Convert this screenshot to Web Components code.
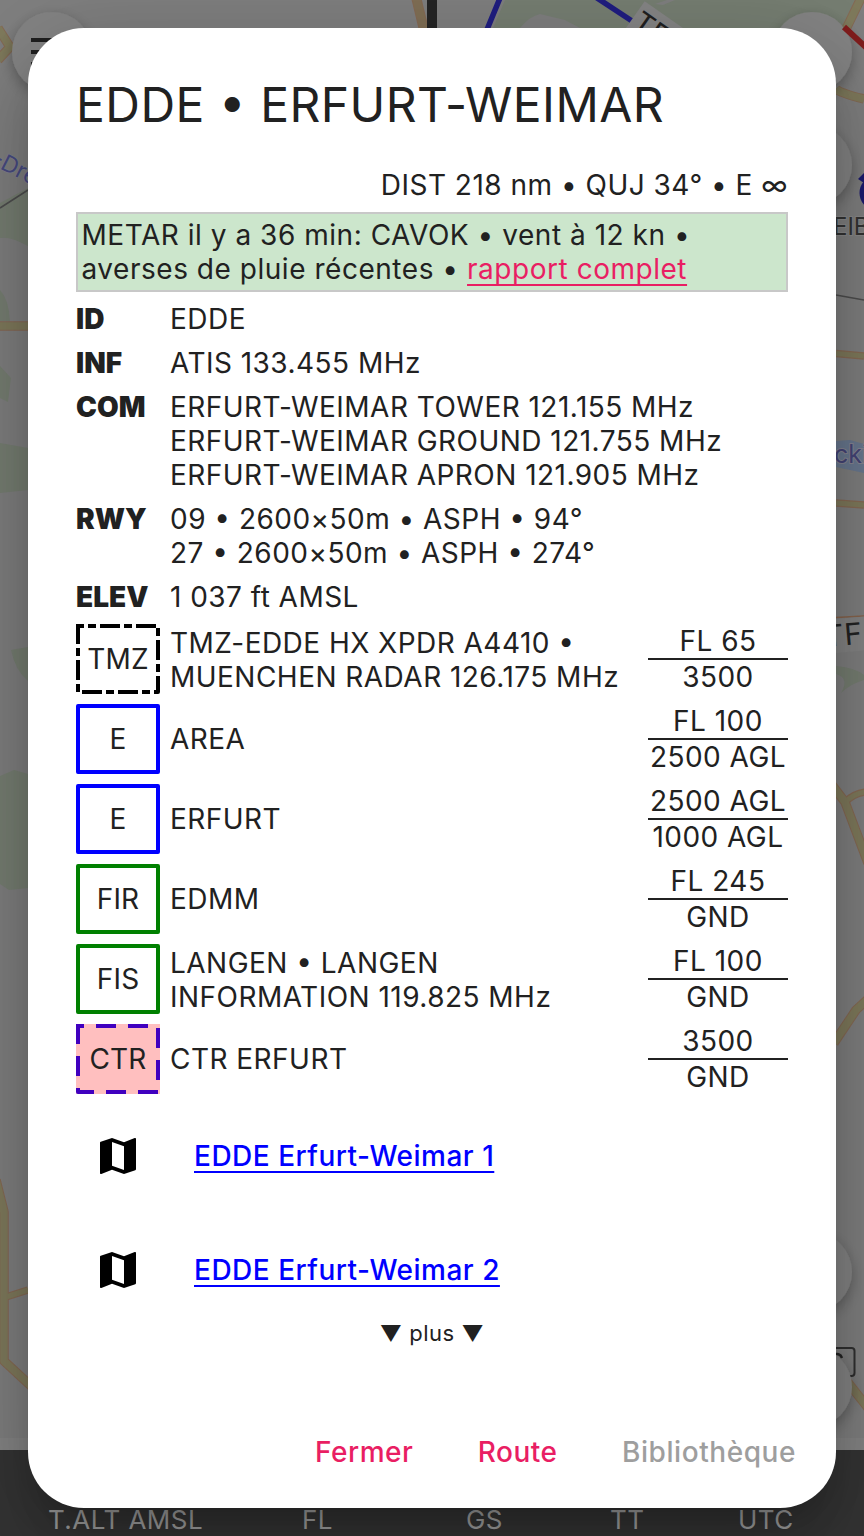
<!DOCTYPE html>
<html lang="fr">
<head>
<meta charset="utf-8">
<title>EDDE</title>
<style>
html,body{margin:0;height:100%;overflow:hidden;background:#7d7d7d}
body{font-family:Inter,"Noto Sans",sans-serif;color:#212121}
</style>
</head>
<body>
<flight-app></flight-app>
<script>
const define = (name, html, init) => {
  const t = document.createElement('template');
  t.innerHTML = html;
  customElements.define(name, class extends HTMLElement {
    constructor() {
      super();
      this.attachShadow({mode: 'open'}).append(t.content.cloneNode(true));
    }
    connectedCallback() { if (init) init(this, this.shadowRoot); }
  });
};

/* Dimmed chart behind the dialog */
define('chart-map', `
<style>
:host{display:block;width:864px;height:1450px}
svg{display:block}
text{font-family:Inter,"Noto Sans",sans-serif}
</style>
<svg width="864" height="1450" viewBox="0 0 864 1450">
  <defs><filter id="s" x="-50%" y="-50%" width="200%" height="200%"><feDropShadow dx="0" dy="5" stdDeviation="7" flood-opacity=".28"/></filter></defs>
  <rect width="864" height="1450" fill="#7f7f7f"/>
  <g fill="#767e72">
    <path d="M505 0H864L835 40H488zM0 203L28 188V246Q10 236 0 238zM0 290Q9 300 10 321H0zM0 366L11 378L8 402L0 398zM0 443L28 448V490L0 493zM11 650L28 647V681Q15 670 11 650zM0 776L14 770L28 774V888L9 890L0 884z"/>
    <path d="M836 666Q856 668 864 675V680Q850 684 841 693Q850 678 836 674z"/>
  </g>
  <path d="M520 28Q530 16 540 14L565 20L580 28zM655 4l12-4h8l-12 5z" fill="#7f7f7f"/>
  <g fill="none" stroke="#866a54" stroke-linejoin="round">
    <path stroke-width="7.500" d="M836 353.500L864 356M836 503L864 505M6 1297L28 1290M845 802Q856 792 868 792"/>
    <path stroke-width="9.500" d="M0 326H28M864 -8L846 29M836 89Q840 93 864 99M-2 28L10 47L-2 60M-4 1180L4 1212V1361L31 1386M832 785L845 802L868 863M834 1043L856 1010L868 999M846 1380L868 1408"/>
    <path stroke-width="10" d="M416 -3L424 30"/>
  </g>
  <g fill="none" stroke="#7f7a5c" stroke-linejoin="round">
    <path stroke-width="5" d="M836 353.500L864 356M836 503L864 505M6 1297L28 1290M845 802Q856 792 868 792"/>
    <path stroke-width="7.500" d="M0 326H28M864 -8L846 29M836 89Q840 93 864 99M-2 28L10 47L-2 60M-4 1180L4 1212V1361L31 1386M832 785L845 802L868 863M834 1043L856 1010L868 999M846 1380L868 1408"/>
    <path d="M416 -3L424 30" stroke="#806f55" stroke-width="8"/>
  </g>
  <path d="M0 208L28 190M836 295L864 300" stroke="#4d4d4d" stroke-width="1.500"/>
  <path d="M836 617.500L864 616" stroke="#87644c" stroke-width="1.500"/>
  <path d="M427 0H437V30H427z" fill="#252525"/>
  <path d="M500 -2L486 32M594 -4L632 21" stroke="#201e80" stroke-width="5.500"/>
  <g transform="translate(641,17) rotate(35)"><path d="M-6 -15H70V22H-6z" fill="#858585"/><text x="-3" y="14" font-size="29" fill="#202020">TF</text></g>
  <path d="M836 441L850 440L864 444V473L836 467z" fill="#69788f"/>
  <text x="834" y="463" font-size="25" fill="#444477" stroke="#858592" stroke-width="2" paint-order="stroke">cki</text>
  <text x="833" y="235" font-size="24" fill="#333" stroke="#898989" stroke-width="2" paint-order="stroke">EIB</text>
  <path d="M877 179A14 14 0 0 0 877 207" fill="none" stroke="#1c1a70" stroke-width="7"/>
  <path d="M858 179L864 173V183z" fill="#1c1a70"/>
  <g transform="translate(836,636) rotate(-5)"><path d="M-4 -17H40V17H-4z" fill="#848484"/><text x="-12" y="10" font-size="30" letter-spacing="1" fill="#222">TFC</text></g>
  <text x="-13" y="169" font-size="23" fill="#484b80" transform="rotate(27 0 172)" stroke="#858592" stroke-width="1" paint-order="stroke">-Dre</text>
  <g filter="url(#s)" fill="#848484"><circle cx="52" cy="52" r="40"/><circle cx="812" cy="52" r="40"/><circle cx="812" cy="165" r="40"/><circle cx="812" cy="1272" r="40"/></g>
  <path d="M31 38H70V42H31zM31 50H70V54H31zM31 62H70V66H31z" fill="#202020"/>
  <path d="M844 27L870 51" stroke="#811d1d" stroke-width="6"/>
  <rect x="800" y="1348" width="54.500" height="28" rx="3" fill="none" stroke="#303030" stroke-width="2"/>
  <path d="M832 1355Q840 1352 842 1358" fill="none" stroke="#252525" stroke-width="2.500"/>
  <circle cx="812" cy="1387" r="40" fill="#848484" filter="url(#s)"/>
  <path d="M0 1438H864V1450H0z" fill="#848484"/>
</svg>`);

define('flight-bar', `
<style>
:host{box-sizing:border-box;display:grid;grid-template-columns:254px 164px 144px 128px auto;padding:53px 0 0 48px;height:86px;background:#343434;color:#a0a0a0;font-size:26px;line-height:34px;letter-spacing:.46px;white-space:nowrap}
</style><slot></slot>`);

define('modal-sheet', `
<style>
:host{box-sizing:border-box;display:flex;flex-direction:column;width:808px;height:1480px;padding:45px 40px 26px 48px;border-radius:56px;background:#fff;font-size:28px;line-height:34px;letter-spacing:.5px;
box-shadow:0 22px 30px -14px rgba(0,0,0,.2),0 48px 76px 6px rgba(0,0,0,.14),0 18px 92px 16px rgba(0,0,0,.12)}
h1{margin:0;font-size:48px;font-weight:400;line-height:64px;letter-spacing:.45px;white-space:nowrap}
main{width:712px;margin-top:31px;flex:1;display:flex;flex-direction:column;gap:10px}
footer{display:flex;justify-content:flex-end;gap:64.500px;height:60px;align-items:center}
</style>
<h1><slot name="title"></slot></h1><main><slot></slot></main><footer><slot name="actions"></slot></footer>`);

define('route-summary', `<style>:host{display:block;text-align:right;white-space:nowrap;letter-spacing:.49px}</style><slot></slot>`);

define('metar-box', `
<style>
:host{box-sizing:border-box;display:block;height:80px;border:2px solid #c8c8c8;background:#cce6cc;padding:4px 3.500px;letter-spacing:.53px}
a{color:#e91e63;text-decoration:underline 2px;text-underline-offset:5px;text-decoration-skip-ink:none}
</style><slot></slot><a>rapport complet</a>`);

define('info-row', `
<style>
:host{display:grid;grid-template-columns:84px 1fr;column-gap:10px;white-space:nowrap;letter-spacing:.47px}
b{font-weight:900;letter-spacing:0}
</style><b></b><span><slot></slot></span>`,
(el, r) => { r.querySelector('b').textContent = el.getAttribute('label'); });

define('zone-badge', `
<style>
:host{display:grid;width:84px;height:70px;letter-spacing:.2px}
svg,span,i{grid-area:1/1}
span{place-self:center;position:relative}
i{background:rgba(255,0,0,.25);display:none}
:host([filled]) i{display:block}
svg{display:block}
</style>
<svg width="84" height="70"><path d="M2 2H82V68H2Z" fill="none" stroke-width="4" stroke-linejoin="round"/><path class="c" d="M0 0H3V3H0z"/></svg><i></i><span><slot></slot></span>`,
(el, r) => {
  const [p, c] = r.querySelectorAll('path'), color = el.getAttribute('color'), dash = el.getAttribute('dash');
  p.setAttribute('stroke', color);
  if (dash) {
    p.setAttribute('stroke-dasharray', dash);
    p.setAttribute('stroke-dashoffset', '14');
    c.setAttribute('fill', color);
  } else c.remove();
});

define('zone-row', `
<style>
:host{display:grid;grid-template-columns:84px 458px 140px;column-gap:10px;align-items:center;height:70px;letter-spacing:.47px}
:host([double]) .n{padding-top:1px}
.v{width:140px;margin-left:10px;text-align:center;white-space:nowrap}
.v div+div{border-top:2px solid #212121}
</style>
<div class="b"></div><div class="n"><slot></slot></div><div class="v"><div></div><div></div></div>`,
(el, r) => {
  const looks = {TMZ: ['#000', '20 4 8 4'], E: ['#00f'], FIR: ['green'], FIS: ['green'], CTR: ['#00f', '20 12']};
  const kind = el.getAttribute('kind'), [color, dash] = looks[kind];
  r.querySelector('.b').innerHTML = '<zone-badge color="' + color + '"' + (dash ? ' dash="' + dash + '"' : '') +
    (kind === 'CTR' ? ' filled' : '') + '>' + kind + '</zone-badge>';
  const d = r.querySelectorAll('.v div');
  d[0].textContent = el.getAttribute('upper');
  d[1].textContent = el.getAttribute('lower');
});

define('chart-link', `
<style>
:host{display:flex;align-items:center;height:104px;padding-left:18px;gap:52px}
svg{display:block;width:48px;height:48px}
a{color:#00f;font-weight:500;text-decoration:underline 2px;text-underline-offset:5px;text-decoration-skip-ink:none;letter-spacing:.5px;white-space:nowrap}
</style>
<svg viewBox="0 0 24 24"><path d="M20.500 3l-.16.03L15 5.100 9 3 3.360 4.900c-.21.07-.36.25-.36.48V20.500c0 .28.22.5.5.5l.16-.03L9 18.900l6 2.100 5.640-1.900c.21-.07.36-.25.36-.48V3.500c0-.28-.22-.5-.5-.5zM15 19l-6-2.110V5l6 2.110V19z"/></svg><a><slot></slot></a>`);

define('more-toggle', `<style>:host{display:block;text-align:center;font-size:22px;line-height:28px;margin-top:-13px}</style><slot></slot>`);

define('text-button', `
<style>
:host{display:block;color:#e91e63;font-weight:500;letter-spacing:.5px}
:host([disabled]){color:#9e9e9e;letter-spacing:.56px}
</style><slot></slot>`);

/* Application shell: chart and data bar in flow, the dialog laid over both */
define('flight-app', `
<style>
:host{display:block;position:relative;width:864px;height:1536px;overflow:hidden}
modal-sheet{position:absolute;left:28px;top:28px}
.up{font-feature-settings:"case"}
</style>
<chart-map></chart-map>
<flight-bar><span>T.ALT AMSL</span><span>FL</span><span>GS</span><span>TT</span><span>UTC</span></flight-bar>
<modal-sheet>
  <span slot="title">EDDE <span class="up">•</span> ERFURT-WEIMAR</span>
  <route-summary>DIST 218 nm • QUJ 34° • E ∞</route-summary>
  <metar-box>METAR il y a 36 min: CAVOK • vent à 12 kn • averses de pluie récentes • </metar-box>
  <info-row label="ID">EDDE</info-row>
  <info-row label="INF">ATIS 133.455 MHz</info-row>
  <info-row label="COM">ERFURT-WEIMAR TOWER 121.155 MHz<br>ERFURT-WEIMAR GROUND 121.755 MHz<br>ERFURT-WEIMAR APRON 121.905 MHz</info-row>
  <info-row label="RWY">09 <span class="up">•</span> 2600×50m • ASPH <span class="up">•</span> 94°<br>27 <span class="up">•</span> 2600×50m • ASPH <span class="up">•</span> 274°</info-row>
  <info-row label="ELEV">1 037 ft AMSL</info-row>
  <zone-row double kind="TMZ" upper="FL 65" lower="3500">TMZ-EDDE HX XPDR A4410 <span class="up">•</span> MUENCHEN RADAR 126.175 MHz</zone-row>
  <zone-row kind="E" upper="FL 100" lower="2500 AGL">AREA</zone-row>
  <zone-row kind="E" upper="2500 AGL" lower="1000 AGL">ERFURT</zone-row>
  <zone-row kind="FIR" upper="FL 245" lower="GND">EDMM</zone-row>
  <zone-row double kind="FIS" upper="FL 100" lower="GND">LANGEN <span class="up">•</span> LANGEN INFORMATION 119.825 MHz</zone-row>
  <zone-row kind="CTR" upper="3500" lower="GND">CTR ERFURT</zone-row>
  <chart-link>EDDE Erfurt-Weimar 1</chart-link>
  <chart-link>EDDE Erfurt-Weimar 2</chart-link>
  <more-toggle>▼ plus ▼</more-toggle>
  <text-button slot="actions">Fermer</text-button>
  <text-button slot="actions">Route</text-button>
  <text-button slot="actions" disabled>Bibliothèque</text-button>
</modal-sheet>`);
</script>
</body>
</html>
